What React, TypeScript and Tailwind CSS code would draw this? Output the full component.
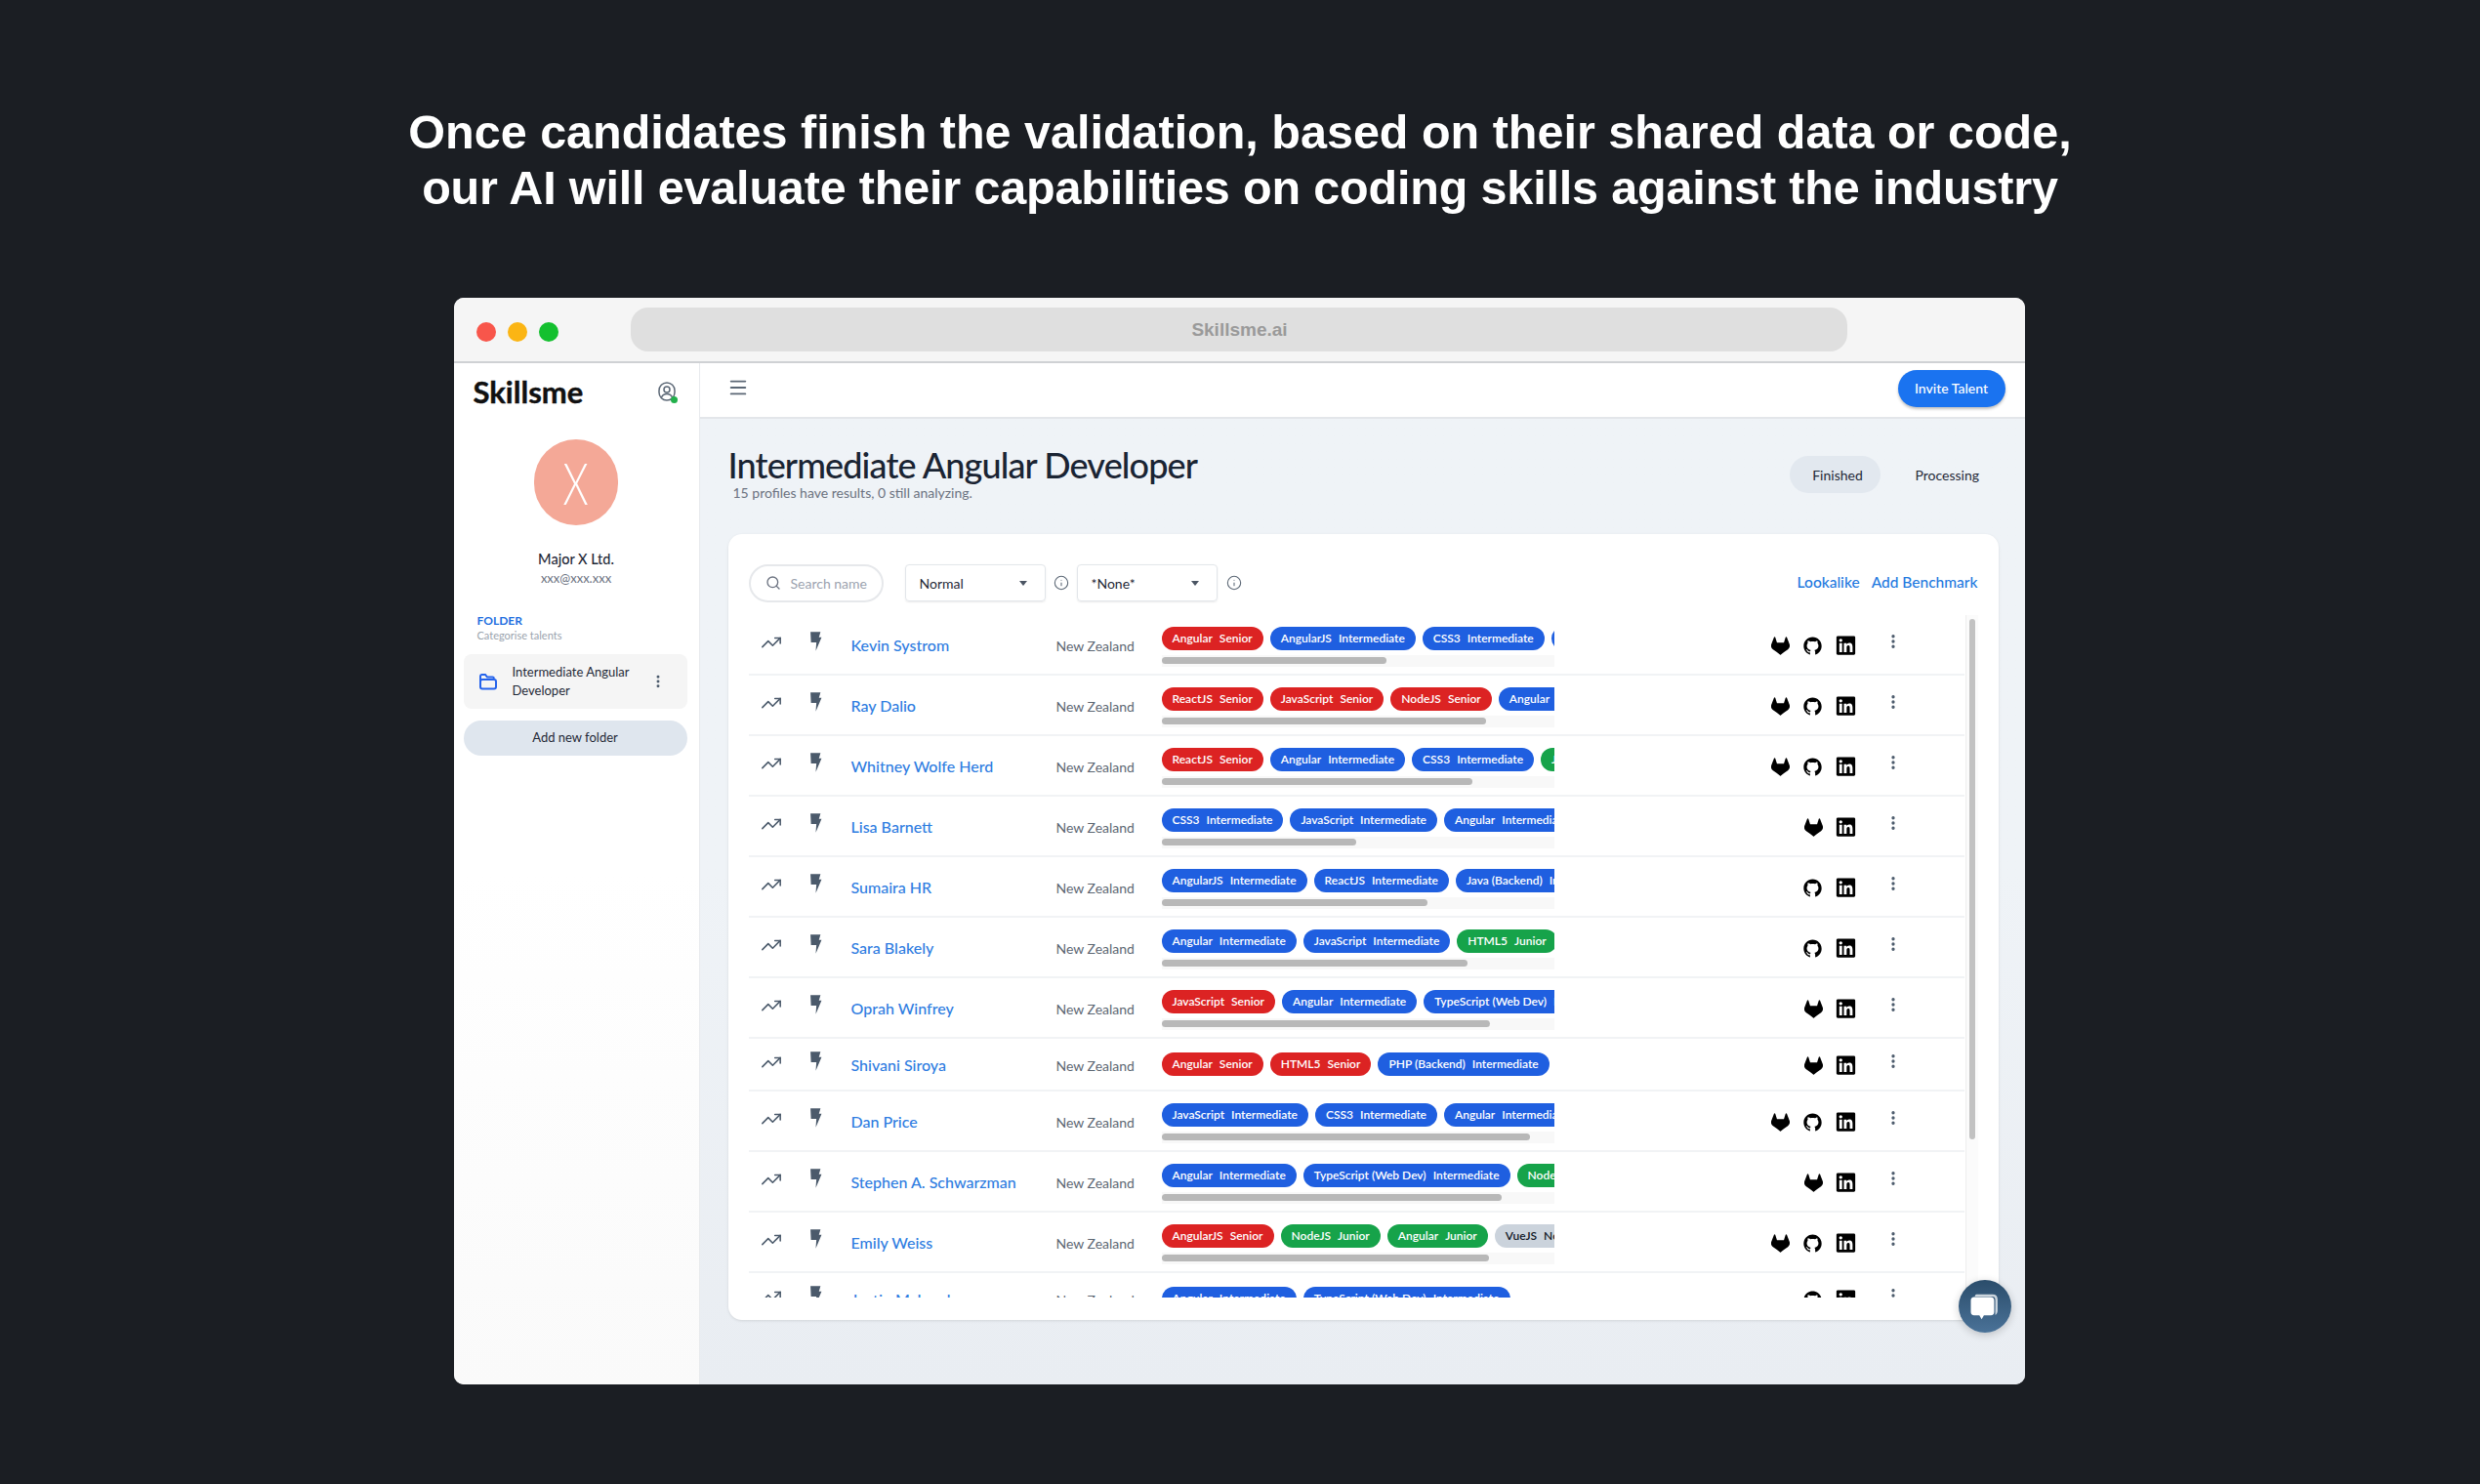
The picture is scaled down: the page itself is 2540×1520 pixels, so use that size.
import React from 'react';
import { Info, Menu, MoreVertical, Search, TrendingUp } from 'lucide-react';
import { AiOutlineGithub } from 'react-icons/ai';
import { SiGitlab } from 'react-icons/si';
import { FaLinkedin } from 'react-icons/fa';

type Level = 'red' | 'blue' | 'green' | 'gray';
type Row = { name: string; tags: [string, string, Level][]; bar: number; gl?: boolean; gh?: boolean };

const S: Level = 'red';
const I: Level = 'blue';
const J: Level = 'green';

// bar = 0 means the tags fit, so the row has no scrollbar and is shorter
const rows: Row[] = [
  { name: 'Kevin Systrom', bar: 230, gl: true, gh: true, tags: [['Angular', 'Senior', S], ['AngularJS', 'Intermediate', I], ['CSS3', 'Intermediate', I], ['HTML5', 'Intermediate', I]] },
  { name: 'Ray Dalio', bar: 332, gl: true, gh: true, tags: [['ReactJS', 'Senior', S], ['JavaScript', 'Senior', S], ['NodeJS', 'Senior', S], ['Angular', 'Intermediate', I]] },
  { name: 'Whitney Wolfe Herd', bar: 318, gl: true, gh: true, tags: [['ReactJS', 'Senior', S], ['Angular', 'Intermediate', I], ['CSS3', 'Intermediate', I], ['JS', 'Junior', J]] },
  { name: 'Lisa Barnett', bar: 199, gl: true, tags: [['CSS3', 'Intermediate', I], ['JavaScript', 'Intermediate', I], ['Angular', 'Intermediate', I]] },
  { name: 'Sumaira HR', bar: 272, gh: true, tags: [['AngularJS', 'Intermediate', I], ['ReactJS', 'Intermediate', I], ['Java (Backend)', 'Intermediate', I]] },
  { name: 'Sara Blakely', bar: 313, gh: true, tags: [['Angular', 'Intermediate', I], ['JavaScript', 'Intermediate', I], ['HTML5', 'Junior', J]] },
  { name: 'Oprah Winfrey', bar: 336, gl: true, tags: [['JavaScript', 'Senior', S], ['Angular', 'Intermediate', I], ['TypeScript (Web Dev)', 'Intermediate', I]] },
  { name: 'Shivani Siroya', bar: 0, gl: true, tags: [['Angular', 'Senior', S], ['HTML5', 'Senior', S], ['PHP (Backend)', 'Intermediate', I]] },
  { name: 'Dan Price', bar: 377, gl: true, gh: true, tags: [['JavaScript', 'Intermediate', I], ['CSS3', 'Intermediate', I], ['Angular', 'Intermediate', I]] },
  { name: 'Stephen A. Schwarzman', bar: 348, gl: true, tags: [['Angular', 'Intermediate', I], ['TypeScript (Web Dev)', 'Intermediate', I], ['NodeJS', 'Junior', J]] },
  { name: 'Emily Weiss', bar: 335, gl: true, gh: true, tags: [['AngularJS', 'Senior', S], ['NodeJS', 'Junior', J], ['Angular', 'Junior', J], ['VueJS', 'Novice', 'gray']] },
  { name: 'Justin McLeod', bar: 0, gh: true, tags: [['Angular', 'Intermediate', I], ['TypeScript (Web Dev)', 'Intermediate', I]] },
];

const chipColor: Record<Level, string> = {
  red: 'bg-[#dc2323] text-white',
  blue: 'bg-[#1f5fe0] text-white',
  green: 'bg-[#16a34a] text-white',
  gray: 'bg-[#cbd3dc] text-[#111827]',
};

const Bolt = () => (
  <svg viewBox="0 0 12 18" className="w-[13px] h-[20px] fill-[#4b5a6b]">
    <path d="M1 0H10.500L9 5H11.500L6 18 6.600 10H1.500z" />
  </svg>
);

const FolderIcon = () => (
  <svg viewBox="0 0 20 18" className="w-[20px] h-[18px] fill-none stroke-[#2563eb] stroke-[2]">
    <path d="M2 15V3.500C2 2.600 2.600 2 3.400 2H7l2 2.500h5.500c.8 0 1.300.5 1.500 1.500" />
    <rect x="2" y="7" width="16" height="9.500" rx="2" />
  </svg>
);

const UserIcon = () => (
  <div className="relative w-[18px] h-[21px]">
    <svg viewBox="0 0 18 21" className="w-[18px] h-[21px] fill-none stroke-[#5b6775] stroke-[1.5]">
      <rect x="1" y="1" width="16" height="18" rx="8" />
      <circle cx="9" cy="8" r="3" />
      <path d="M3.500 16c1-2.500 3.200-3.500 5.500-3.500s4.500 1 5.500 3.500" />
    </svg>
    <div className="absolute right-[-2px] bottom-[-1px] w-[7px] h-[7px] rounded-full bg-[#22b04b]" />
  </div>
);

const Chat = () => (
  <svg viewBox="0 0 30 30" className="w-[35px] h-[35px]">
    <path d="M8 4h14c3 0 4.500 1.500 4.500 4.500v10c0 2-1 3.200-2 3.800V9c0-2-1-3-3-3H6.500C6.800 4.600 7.200 4 8 4z" fill="#fff" fillOpacity="0.75" />
    <path d="M6 6.500h14.500c2 0 3 1 3 3v10c0 2-1 3-3 3h-6L12.500 26l-2-3.500H6c-2 0-3-1-3-3v-10c0-2 1-3 3-3z" fill="#fff" />
  </svg>
);

const Select = ({ label }: { label: string }) => (
  <div className="w-[144px] h-[38px] shrink-0 rounded-[4px] border border-[#e2e6ea] shadow-[0_1px_2px_rgba(0,0,0,0.08)] flex items-center justify-between pl-[14px] pr-[18px] text-[14px] text-[#1f2937]">
    <span>{label}</span>
    <div className="w-0 h-0 border-x-[4px] border-x-transparent border-t-[5px] border-t-[#4b5563]" />
  </div>
);

const TalentRow = ({ row, last }: { row: Row; last: boolean }) => (
  <div className={`${row.bar > 0 ? 'h-[62px]' : 'h-[54px]'} shrink-0 flex items-center border-b-2 border-[#f1f3f5] ${last ? 'border-b-0' : ''}`}>
    <div className="w-[62px] pl-[12px] -mt-[5px] shrink-0">
      <TrendingUp className="w-[22px] h-[22px] text-[#4b5a6b]" strokeWidth={1.7} />
    </div>
    <div className="w-[43px] -mt-[6px] shrink-0">
      <Bolt />
    </div>
    <div className="w-[210px] mt-[2px] shrink-0 text-[16px] font-medium text-[#2f7de1] whitespace-nowrap">{row.name}</div>
    <div className="w-[108px] mt-[2px] shrink-0 text-[14px] text-[#5d6773] whitespace-nowrap">New Zealand</div>
    <div className={`w-[402px] shrink-0 overflow-hidden ${row.bar > 0 ? 'mt-[5px]' : 'mt-0'}`}>
      <div className="flex gap-[7px] whitespace-nowrap">
        {row.tags.map(([a, b, c], i) => (
          <div key={i} className={`h-[24px] shrink-0 rounded-full px-[11px] flex items-center gap-[7px] text-[12px] font-semibold ${chipColor[c]}`}>
            <span>{a}</span>
            <span>{b}</span>
          </div>
        ))}
      </div>
      {row.bar > 0 && (
        <div className="h-[12px] mt-[5px] py-[2px] bg-[#f8f8f8]">
          <div className="h-[7px] rounded-full bg-[#b8b8b8]" style={{ width: row.bar }} />
        </div>
      )}
    </div>
    <div className="flex-1 flex justify-end items-center gap-[13px] text-black mt-[2px]">
      {row.gl && <SiGitlab className="w-[19px] h-[19px]" />}
      {row.gh && <AiOutlineGithub className="w-[21px] h-[21px]" />}
      <FaLinkedin className="w-[21px] h-[22px]" />
    </div>
    <div className="w-[76px] shrink-0 flex justify-center -mt-[6px]">
      <MoreVertical className="w-[18px] h-[18px] text-[#4b5a6b]" strokeWidth={2.4} />
    </div>
    <div className="w-[35px] shrink-0" />
  </div>
);

export default function App() {
  return (
    <div className="w-[2540px] h-[1520px] bg-[#1b1e23] overflow-hidden flex flex-col items-center font-['Lato',sans-serif]">
      <div className="h-[305px] shrink-0 flex flex-col items-center pt-[107px] text-white font-['Liberation_Sans',sans-serif] font-bold text-[48.500px] leading-[57px]">
        <div>Once candidates finish the validation, based on their shared data or code,</div>
        <div className="tracking-[-0.160px]">our AI will evaluate their capabilities on coding skills against the industry</div>
      </div>

      <div className="w-[1609px] h-[1113px] mr-[2px] shrink-0 rounded-[10px] overflow-hidden flex flex-col bg-white relative">
        <div className="h-[67px] shrink-0 bg-[#f5f5f5] border-b-2 border-[#cfd1d4] flex items-center pl-[23px] pr-[182px]">
          <div className="flex gap-[12px] w-[158px] shrink-0 mt-[4px]">
            <div className="w-[20px] h-[20px] rounded-full bg-[#f8564b]" />
            <div className="w-[20px] h-[20px] rounded-full bg-[#fbb514]" />
            <div className="w-[20px] h-[20px] rounded-full bg-[#14c02f]" />
          </div>
          <div className="flex-1 h-[45px] pt-[2px] pl-[2px] rounded-[18px] bg-[#dfdfdf] flex items-center justify-center text-[19px] font-bold text-[#9a9a9a] font-['Liberation_Sans',sans-serif]">
            Skillsme.ai
          </div>
        </div>

        <div className="flex-1 flex min-h-0">
          <div className="w-[252px] shrink-0 bg-gradient-to-b from-white via-white to-[#fafafa] border-r border-[#e8eaed] flex flex-col">
            <div className="h-[57px] shrink-0 flex items-center justify-between pl-[20px] pr-[24px] pt-[1px]">
              <div className="text-[31px] font-bold text-[#111] [-webkit-text-stroke:0.4px_#111]">Skillsme</div>
              <UserIcon />
            </div>
            <div className="w-[86px] h-[88px] mt-[21px] self-center rounded-full bg-[#f4a897] flex items-center justify-center text-white text-[60px] font-light">
              <span className="scale-x-[0.7]">X</span>
            </div>
            <div className="mt-[24px] text-center text-[14.500px] text-[#1f2937] font-medium">Major X Ltd.</div>
            <div className="-mt-[1px] text-center text-[13px] text-[#6b7280]">xxx@xxx.xxx</div>
            <div className="mt-[25px] pl-[24px] text-[12px] font-bold text-[#1f6fe0]">FOLDER</div>
            <div className="-mt-[2px] pl-[24px] text-[11px] text-[#9aa3ad]">Categorise talents</div>
            <div className="ml-[10px] mr-[12px] mt-[10px] h-[56px] rounded-[8px] bg-[#f5f5f5] flex items-center pl-[15px] pr-[22px]">
              <FolderIcon />
              <div className="w-[132px] ml-[15px] text-[13px] leading-[19px] text-[#1f2937]">Intermediate Angular Developer</div>
              <MoreVertical className="ml-auto w-[16px] h-[16px] text-[#4b5a6b]" strokeWidth={2.4} />
            </div>
            <div className="ml-[10px] mr-[12px] mt-[12px] h-[36px] rounded-full bg-[#dfe6ee] flex items-center justify-center text-[13px] text-[#1f2937]">Add new folder</div>
          </div>

          <div className="flex-1 flex flex-col min-w-0 bg-gradient-to-b from-[#eff3f7] via-[#eff3f7] to-[#e9edf2]">
            <div className="h-[57px] shrink-0 bg-white border-b-2 border-[#e3e6ea] flex items-center justify-between pl-[28px] pr-[20px]">
              <Menu className="w-[22px] h-[22px] text-[#5b6775] -mt-[6px]" strokeWidth={2} />
              <div className="w-[110px] h-[38px] -mt-[4px] rounded-full bg-[#1a73f0] shadow-[0_2px_3px_rgba(0,0,0,0.25)] flex items-center justify-center text-white text-[14px] font-medium">Invite Talent</div>
            </div>

            <div className="flex-1 min-h-0 pl-[29px] pr-[27px] flex flex-col">
              <div className="h-[118px] shrink-0 flex justify-between">
                <div className="pt-[26px]">
                  <div className="text-[36px] leading-[42px] font-medium text-[#1a2433] tracking-[-0.870px] whitespace-nowrap">Intermediate Angular Developer</div>
                  <div className="pl-[5px] text-[14px] leading-[16px] text-[#6b7280]">15 profiles have results, 0 still analyzing.</div>
                </div>
                <div className="flex items-center h-[38px] mt-[38px] text-[14px] text-[#1f2937]">
                  <div className="w-[93px] h-[38px] rounded-full bg-[#e2e8ef] flex items-center justify-center pl-[6px]">Finished</div>
                  <div className="w-[103px] pl-[36px] whitespace-nowrap">Processing</div>
                  <div className="w-[18px]" />
                </div>
              </div>

              <div className="h-[805px] shrink-0 bg-white rounded-[14px] shadow-[0_1px_3px_rgba(0,0,0,0.1)] flex flex-col pl-[21px] pr-[21px] relative">
                <div className="h-[83px] shrink-0 flex items-center pt-[17px]">
                  <div className="w-[138px] h-[39px] rounded-full border-2 border-[#e6e8eb] flex items-center pl-[15px] gap-[10px] text-[14px] text-[#9ca3af] shrink-0">
                    <Search className="w-[16px] h-[16px] text-[#6b7280]" strokeWidth={2} />
                    <span className="whitespace-nowrap">Search name</span>
                  </div>
                  <div className="w-[22px] shrink-0" />
                  <Select label="Normal" />
                  <Info className="w-[16px] h-[16px] mx-[8px] text-[#5b6775] shrink-0" strokeWidth={1.6} />
                  <Select label="*None*" />
                  <Info className="w-[16px] h-[16px] ml-[9px] text-[#5b6775] shrink-0" strokeWidth={1.6} />
                  <div className="ml-auto -mt-[1px] flex gap-[12px] text-[15.500px] font-medium text-[#1f7ae0] whitespace-nowrap">
                    <span>Lookalike</span>
                    <span>Add Benchmark</span>
                  </div>
                </div>
                <div className="h-[699px] shrink-0 flex overflow-hidden">
                  <div className="w-[1245px] shrink-0 flex flex-col">
                    {rows.map((r, i) => (
                      <TalentRow key={r.name} row={r} last={i === rows.length - 1} />
                    ))}
                  </div>
                  <div className="w-[14px] ml-[1px] h-[699px] bg-[#fbfbfb] border-l border-[#eeeeee] flex justify-center pt-[4px]">
                    <div className="w-[6px] h-[533px] rounded-full bg-[#c2c2c2]" />
                  </div>
                </div>
              </div>
            </div>
          </div>
        </div>

        <div className="absolute right-[14px] bottom-[53px] w-[54px] h-[54px] rounded-full bg-gradient-to-b from-[#2b4d6b] to-[#4a7298] shadow-[0_2px_8px_rgba(0,0,0,0.2)] flex items-center justify-center">
          <Chat />
        </div>
      </div>
    </div>
  );
}
